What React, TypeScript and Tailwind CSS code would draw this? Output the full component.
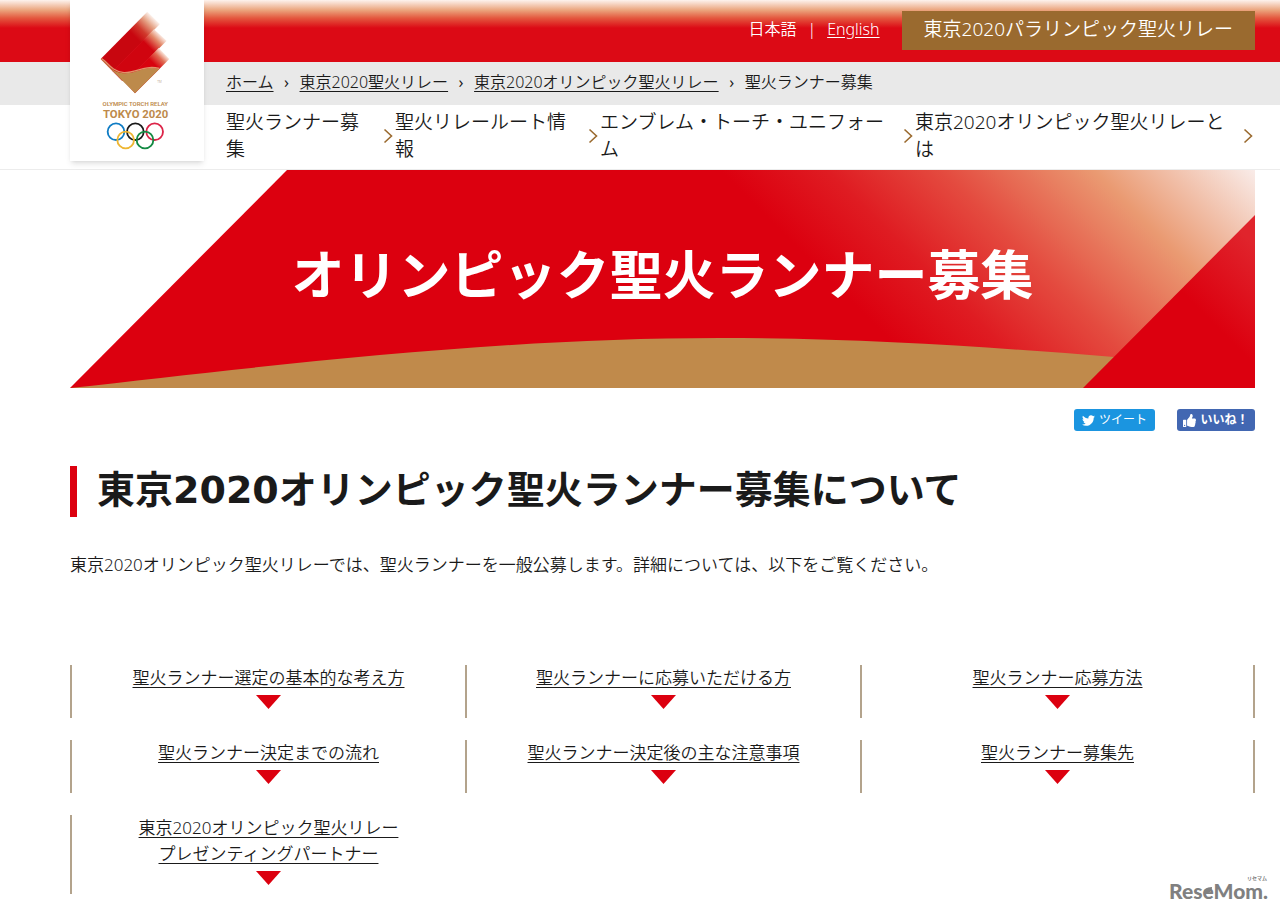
import React from "react";
import { FaTwitter, FaThumbsUp } from "react-icons/fa";

const crumbs = ["ホーム", "東京2020聖火リレー", "東京2020オリンピック聖火リレー"];

const navItems = [
  "聖火ランナー募集",
  "聖火リレールート情報",
  "エンブレム・トーチ・ユニフォーム",
  "東京2020オリンピック聖火リレーとは",
];

const sections: string[][] = [
  ["聖火ランナー選定の基本的な考え方"],
  ["聖火ランナーに応募いただける方"],
  ["聖火ランナー応募方法"],
  ["聖火ランナー決定までの流れ"],
  ["聖火ランナー決定後の主な注意事項"],
  ["聖火ランナー募集先"],
  ["東京2020オリンピック聖火リレー", "プレゼンティングパートナー"],
];

const rings = [
  { cx: 168, cy: 395, color: "#0f7cc4" },
  { cx: 226, cy: 395, color: "#1a1a1a" },
  { cx: 284, cy: 395, color: "#dc2448" },
  { cx: 197, cy: 420, color: "#eeb632" },
  { cx: 255, cy: 420, color: "#138a43" },
];

function Logo() {
  return (
    <svg viewBox="30 0 402 483" className="block h-[161px] w-[134px]" role="img" aria-label="Olympic Torch Relay Tokyo 2020">
      <defs>
        <linearGradient id="flame1" gradientUnits="userSpaceOnUse" x1="225" y1="110" x2="282" y2="53">
          <stop offset="0" stopColor="#c8060f" />
          <stop offset="0.35" stopColor="#d0392c" />
          <stop offset="0.7" stopColor="#e5a184" />
          <stop offset="1" stopColor="#fdf6f2" />
        </linearGradient>
        <linearGradient id="flame2" gradientUnits="userSpaceOnUse" x1="266" y1="140" x2="302" y2="104">
          <stop offset="0" stopColor="#d0040f" />
          <stop offset="0.6" stopColor="#e38a6a" />
          <stop offset="1" stopColor="#fbeee8" />
        </linearGradient>
        <linearGradient id="flame3" gradientUnits="userSpaceOnUse" x1="282" y1="192" x2="312" y2="162">
          <stop offset="0" stopColor="#d8030f" />
          <stop offset="0.6" stopColor="#e06d54" />
          <stop offset="1" stopColor="#f8ded2" />
        </linearGradient>
      </defs>
      <path d="M122 177 L262 35 L300 72 L158 214 Z" fill="url(#flame1)" />
      <path d="M157 213 L282 88 L320 122 L200 242 L186 242 Z" fill="url(#flame2)" />
      <path d="M194 246 L296 144 L328 177 L225 280 Z" fill="url(#flame3)" />
      <path d="M122 177 C137 180 150 218 192 220 C230 222 250 196 298 207 L225 280 Z" fill="#bd8a4b" />
      <path d="M124 176 C139 180 152 215 192 218 C230 219 250 195 298 205" fill="none" stroke="#e0926a" strokeWidth="4" />
      <text x="298" y="249" fontSize="9" textAnchor="middle" fill="#a98a68" fontFamily="Roboto, sans-serif">TM</text>
      <text x="226" y="319" fontSize="18" fontWeight="600" textAnchor="middle" fill="#bd8a4b" fontFamily="Roboto, sans-serif">OLYMPIC TORCH RELAY</text>
      <text x="227" y="354" fontSize="34" fontWeight="700" textAnchor="middle" fill="#bd8a4b" fontFamily="Roboto, sans-serif">TOKYO 2020</text>
      {rings.map((r) => (
        <circle key={r.cx} cx={r.cx} cy={r.cy} r="25" fill="none" stroke={r.color} strokeWidth="5.500" />
      ))}
    </svg>
  );
}

function BannerArt() {
  return (
    <svg viewBox="0 0 1185 218" preserveAspectRatio="none" className="col-start-1 row-start-1 h-full w-full" aria-hidden="true">
      <defs>
        <linearGradient id="glow" gradientUnits="userSpaceOnUse" x1="650" y1="0" x2="917" y2="-267">
          <stop offset="0" stopColor="#dc000f" />
          <stop offset="0.2" stopColor="#df1c22" />
          <stop offset="0.42" stopColor="#e44c40" />
          <stop offset="0.7" stopColor="#ea9a72" />
          <stop offset="1" stopColor="#f9ebe8" />
        </linearGradient>
        <linearGradient id="corner" gradientUnits="userSpaceOnUse" x1="1090" y1="100" x2="1150" y2="40">
          <stop offset="0" stopColor="#dc000f" />
          <stop offset="1" stopColor="#e0242c" />
        </linearGradient>
      </defs>
      <path d="M217 0 H1185 V218 H0 Z" fill="url(#glow)" />
      <path d="M0 218 C190 197 420 168 650 168 C790 168 920 177 1044 187 L1044 218 Z" fill="#c08a4b" />
      <path d="M1185 45 V218 H1013 Z" fill="url(#corner)" />
    </svg>
  );
}

export default function App() {
  return (
    <div className="relative min-h-screen bg-white pb-[17px] font-['Noto_Sans','Noto_Sans_CJK_JP',sans-serif] font-[350] text-[#1a1a1a]">
      <header className="relative border-b border-[#ececec]">
        <div className="flex h-[62px] items-start justify-end bg-[linear-gradient(to_bottom,#fdf3ee_0px,#eba57e_10px,#e4583f_18px,#dc0a15_28px)] pt-[11px] pr-[25px]">
          <div className="flex h-9 items-center text-base text-white">
            <span>日本語</span>
            <span className="mx-[11px]">|</span>
            <a href="#en" className="underline underline-offset-2">English</a>
          </div>
          <a href="#paralympic" className="ml-[22px] flex h-[39px] items-center bg-[#9a6a2f] px-[22px] pb-[2px] text-[19px] text-white">
            東京2020パラリンピック聖火リレー
          </a>
        </div>
        <nav aria-label="パンくず" className="h-[43px] bg-[#e9e9e9] pl-[226px]">
          <ol className="flex h-10 items-center text-base">
            {crumbs.map((c) => (
              <li key={c} className="flex items-center">
                <a href="#crumb" className="underline underline-offset-3">{c}</a>
                <span className="w-[26px] text-center font-normal">›</span>
              </li>
            ))}
            <li>聖火ランナー募集</li>
          </ol>
        </nav>
        <nav aria-label="メイン" className="pt-1 pr-[25px] pb-[6px] pl-[226px]">
          <ul className="grid grid-cols-[169fr_205fr_315fr_340fr]">
            {navItems.map((n) => (
              <li key={n}>
                <a href="#nav" className="flex items-center text-[19px] leading-[27px]">
                  <span className="flex-1 pr-[14px]">{n}</span>
                  <svg viewBox="0 0 12 16" className="h-4 w-3 shrink-0" fill="none" stroke="#9a6a2f" strokeWidth="1.600" aria-hidden="true">
                    <path d="M1.500 1.500 L8.500 8 L1.500 14.500" />
                  </svg>
                </a>
              </li>
            ))}
          </ul>
        </nav>
        <a href="#top" className="absolute top-0 left-[70px] bg-white shadow-md">
          <Logo />
        </a>
      </header>

      <main className="pr-[25px] pl-[70px]">
        <div className="grid h-[218px]">
          <BannerArt />
          <h1 className="z-10 col-start-1 row-start-1 self-center pb-2 text-center text-[53px] leading-[60px] font-bold text-white">
            オリンピック聖火ランナー募集
          </h1>
        </div>

        <div className="mt-[21px] flex justify-end gap-[22px]">
          <button type="button" className="flex h-[22px] w-[81px] items-center justify-center gap-1 rounded-[3px] bg-[#1b95e0] text-xs font-normal text-white">
            <FaTwitter className="size-[13px]" />
            ツイート
          </button>
          <button type="button" className="flex h-[22px] w-[78px] items-center justify-center gap-1 rounded-[3px] bg-[#4267b2] text-xs font-bold text-white">
            <FaThumbsUp className="size-[13px]" />
            いいね！
          </button>
        </div>

        <h2 className="mt-[35px] border-l-[7px] border-[#dc000f] pb-[3px] pl-5 font-['DejaVu_Sans','Noto_Sans_CJK_JP',sans-serif] text-[38px] leading-[48px] font-bold">
          東京2020オリンピック聖火ランナー募集について
        </h2>

        <p className="mt-[35px] text-[17px] leading-[26px]">
          東京2020オリンピック聖火リレーでは、聖火ランナーを一般公募します。詳細については、以下をご覧ください。
        </p>

        <ul className="mt-[87px] grid grid-cols-3 gap-y-[22px]">
          {sections.map((lines) => (
            <li
              key={lines[0]}
              className="flex flex-col items-center border-l-2 border-[#b3a38c] pb-2 text-center text-[17px] leading-[26px] nth-[3n]:border-r-2"
            >
              <a href="#section" className="underline underline-offset-3">
                {lines.map((l) => (
                  <span key={l} className="block">{l}</span>
                ))}
              </a>
              <svg viewBox="0 0 25 14" className="mt-1 mb-px h-[14px] w-[25px]" aria-hidden="true">
                <path d="M0 0 H25 L12.500 14 Z" fill="#dc000f" />
              </svg>
            </li>
          ))}
        </ul>
      </main>

      <div className="absolute right-1 bottom-2">
        <svg viewBox="0 0 108 28" className="block h-7 w-[108px]" role="img" aria-label="ReseMom" fill="#808080">
          <text x="1" y="24" fontSize="21" fontWeight="900" fontFamily="Lato, sans-serif">ReseMom.</text>
          <text x="79" y="5" fontSize="5" fontWeight="700" fontFamily="'Noto Sans CJK JP', sans-serif">リセマム</text>
          <path d="M36 19 C35 15 38 12 44 12 C44 16 42 18 38 18 Z" />
        </svg>
      </div>
    </div>
  );
}
